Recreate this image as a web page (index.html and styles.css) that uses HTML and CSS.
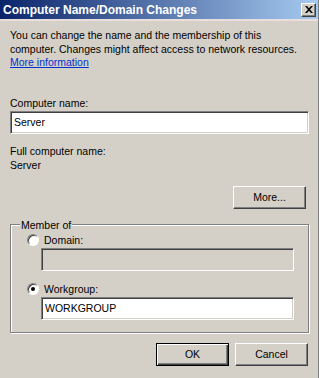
FILE: index.html
```html
<!DOCTYPE html>
<html lang="en">
<head>
    <meta charset="UTF-8">
    <meta name="viewport" content="width=device-width, initial-scale=1.0">
    <title>Computer Name/Domain Changes</title>
    <link rel="stylesheet" href="styles.css">
</head>
<body>
    <div class="dialog">
        <div class="titlebar">
            <span class="title">Computer Name/Domain Changes</span>
            <button class="close-button" aria-label="Close">
                <svg width="8" height="7" viewBox="0 0 8 7">
                    <path d="M0 0 L2 0 L4 2.2 L6 0 L8 0 L5 3.5 L8 7 L6 7 L4 4.8 L2 7 L0 7 L3 3.5 Z" fill="#000"/>
                </svg>
            </button>
        </div>

        <div class="content">
            <p class="intro">
                You can change the name and the membership of this<br>
                computer. Changes might affect access to network resources.<br>
                <a href="#" class="link">More information</a>
            </p>

            <div class="label">Computer name:</div>
            <div class="textbox">Server</div>

            <div class="label full-name-label">Full computer name:</div>
            <div class="full-name">Server</div>

            <div class="more-row">
                <button class="button">More...</button>
            </div>

            <fieldset class="group">
                <legend>Member of</legend>
                <div class="option">
                    <span class="radio"></span>
                    <span>Domain:</span>
                </div>
                <div class="textbox disabled"></div>
                <div class="option">
                    <span class="radio checked"></span>
                    <span>Workgroup:</span>
                </div>
                <div class="textbox">WORKGROUP</div>
            </fieldset>

            <div class="actions">
                <button class="button default">OK</button>
                <button class="button">Cancel</button>
            </div>
        </div>
    </div>
</body>
</html>
```

FILE: styles.css
```css
body {
    margin: 0;
    background: #d4d0c8;
    font-family: "Liberation Sans", Arial, sans-serif;
    font-size: 10.5px;
    color: #000;
}

.dialog {
    width: 319px;
    height: 378px;
    box-sizing: border-box;
    border-right: 1px solid #808080;
    display: flex;
    flex-direction: column;
}

.titlebar {
    height: 19px;
    display: flex;
    align-items: center;
    justify-content: space-between;
    padding: 0 2px 0 3px;
    background: linear-gradient(to right, #0a246a, #a6caf0);
    border-bottom: 2px solid #e8dede;
}

.title {
    color: #fff;
    font-weight: bold;
    font-size: 12px;
}

.close-button {
    width: 15px;
    height: 14px;
    padding: 0;
    display: flex;
    align-items: center;
    justify-content: center;
    background: #d4d0c8;
    border: 1px solid;
    border-color: #fff #404040 #404040 #fff;
    box-shadow: inset -1px -1px 0 #808080;
}

.content {
    padding: 0 9px 0 10px;
    display: flex;
    flex-direction: column;
}

.intro {
    margin: 8px 0 0;
    line-height: 13.5px;
    white-space: nowrap;
}

.link {
    color: #0033cc;
}

.label {
    margin-top: 27px;
}

.textbox {
    height: 23px;
    box-sizing: border-box;
    margin-top: 2px;
    padding: 4px 3px 0;
    background: #fff;
    border: 1px solid;
    border-color: #808080 #fff #fff #808080;
    box-shadow: inset 1px 1px 0 #404040, inset -1px -1px 0 #d4d0c8;
}

.textbox.disabled {
    background: #d4d0c8;
}

.full-name-label {
    margin-top: 11px;
}

.full-name {
    margin-top: 2px;
}

.more-row {
    display: flex;
    justify-content: flex-end;
    margin-top: 15px;
    padding-right: 3px;
}

.button {
    width: 73px;
    height: 23px;
    padding: 0;
    font-family: inherit;
    font-size: 10.5px;
    color: #000;
    background: #d4d0c8;
    border: 1px solid;
    border-color: #fff #404040 #404040 #fff;
    box-shadow: inset -1px -1px 0 #808080;
}

.button.default {
    border-color: #000;
    box-shadow: inset 1px 1px 0 #fff, inset -1px -1px 0 #404040, inset -2px -2px 0 #808080;
}

.group {
    margin: 10px 0 0;
    padding: 0 14px 12px 8px;
    border: 1px solid #808080;
    box-shadow: inset 1px 1px 0 #fff, 1px 1px 0 #fff;
}

.group legend {
    padding: 0 1px;
    margin-left: 1px;
    background: #d4d0c8;
}

.group .textbox {
    margin-top: 2px;
    margin-left: 22px;
}

.option {
    display: flex;
    align-items: center;
    gap: 5px;
    margin-left: 8px;
    margin-top: 3px;
}

.option + .textbox + .option {
    margin-top: 12px;
}

.radio {
    width: 12px;
    height: 12px;
    box-sizing: border-box;
    border-radius: 50%;
    background: #fff;
    border: 1px solid;
    border-color: #808080 #fff #fff #808080;
    box-shadow: inset 1px 1px 0 #404040;
    display: flex;
    align-items: center;
    justify-content: center;
}

.radio.checked::after {
    content: "";
    width: 4px;
    height: 4px;
    border-radius: 50%;
    background: #000;
}

.actions {
    display: flex;
    justify-content: flex-end;
    gap: 6px;
    margin-top: 10px;
    padding-right: 1px;
}
```
